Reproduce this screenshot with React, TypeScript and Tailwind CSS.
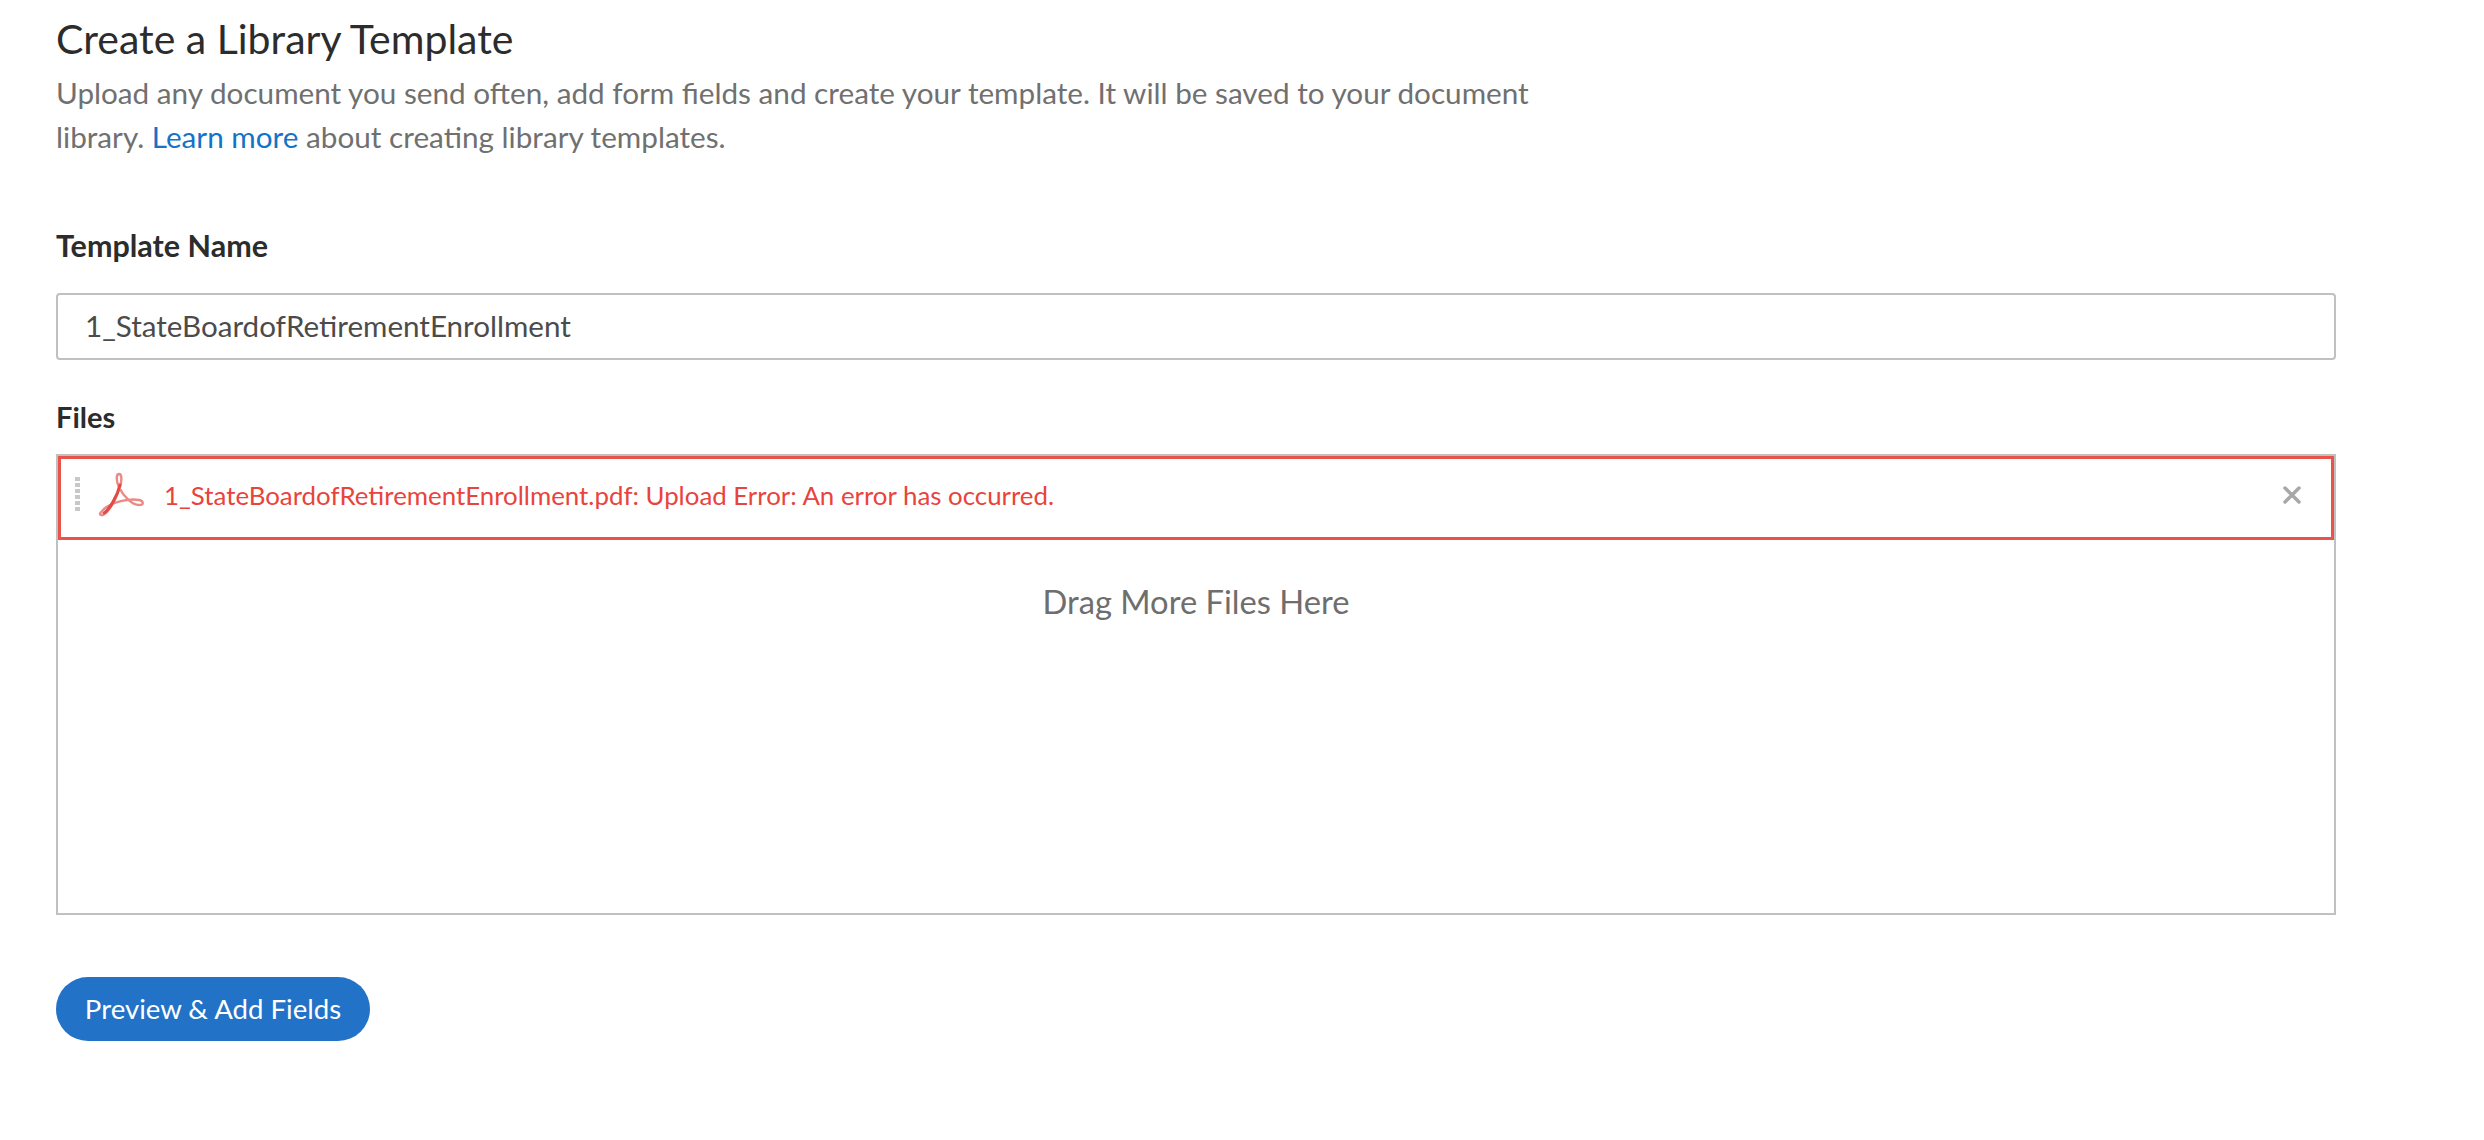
export default function App() {
  return (
    <main className="min-h-screen bg-white pl-[56px] pt-[10px] font-['Lato','Noto_Sans',sans-serif]">
      {/* Header */}
      <h1 className="h-[58px] text-[41px] leading-[58px] text-[#2c2c2c]">Create a Library Template</h1>
      <p className="mt-[3px] w-[1540px] text-[29.7px] leading-[44px] text-[#707070]">
        Upload any document you send often, add form fields and create your template. It will be saved to your document
        library. <a className="text-[#1473c6]">Learn more</a> about creating library templates.
      </p>

      {/* Template name */}
      <label className="mt-[66px] block h-[40px] text-[30.5px] leading-[40px] font-bold text-[#2c2c2c]">Template Name</label>
      <div className="mt-[28px] flex h-[67px] w-[2280px] items-center rounded-[4px] border-2 border-[#c0c0c0] px-[27px] text-[29.6px] text-[#4b4b4b]">
        1_StateBoardofRetirementEnrollment
      </div>

      {/* Files */}
      <label className="mt-[37px] block h-[40px] text-[29px] leading-[40px] font-bold text-[#2c2c2c]">Files</label>
      <div className="mt-[17px] h-[461px] w-[2280px] border-2 border-[#c0c0c0]">
        <div className="flex h-[84px] items-center border-[3px] border-[#e8534c] pb-[6px] pl-[14px] pr-[30px] text-[25.85px] text-[#e8443c]">
          <div className="h-[36px] w-[5px] bg-[repeating-linear-gradient(to_bottom,#c8c8c8_0,#c8c8c8_4px,transparent_4px,transparent_6px)]" />
          <svg className="ml-[17px] h-[46px] w-[48px]" viewBox="0 0 48 46" fill="none">
            <path
              d="M4 43C9 45 18 30 23 15C25 8 25 2 22 2C19 2 19 9 22 15C26 24 35 33 42 33C47 33 47 29 42 28C32 26 15 30 7 37C3 41 2 42 4 43Z"
              stroke="#ec8a85"
              strokeWidth="2.4"
            />
            <path d="M7 41C12 38 20 25 23 13" stroke="#e24a43" strokeWidth="3" strokeLinecap="round" />
          </svg>
          <span className="ml-[19px] flex-1">1_StateBoardofRetirementEnrollment.pdf: Upload Error: An error has occurred.</span>
          <svg className="h-[18px] w-[18px]" viewBox="0 0 18 18" stroke="#a8a8a8" strokeWidth="3.5" strokeLinecap="round">
            <path d="M2 2l14 14M16 2L2 16" />
          </svg>
        </div>
        <div className="pt-[40px] text-center text-[32.7px] leading-[44px] text-[#6e6e6e]">Drag More Files Here</div>
      </div>

      {/* Action */}
      <button className="mt-[62px] h-[64px] w-[314px] rounded-full bg-[#2272c8] text-[27.6px] text-white">Preview &amp; Add Fields</button>
    </main>
  );
}
